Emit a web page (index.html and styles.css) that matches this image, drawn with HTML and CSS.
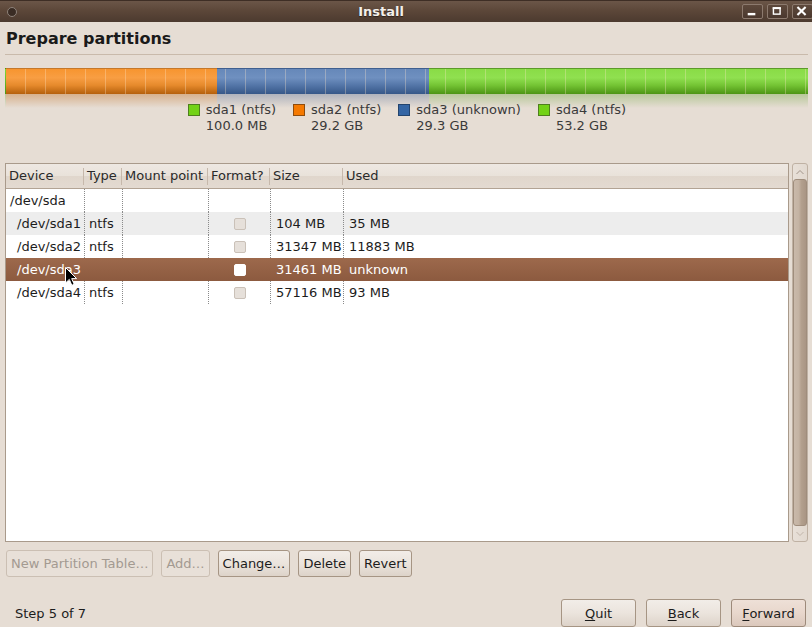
FILE: index.html
```html
<!DOCTYPE html>
<html>
<head>
<meta charset="utf-8">
<title>Install</title>
<link rel="stylesheet" href="styles.css">
</head>
<body>
<div class="window">
  <div class="titlebar">
    <span class="tb-menu"></span>
    <span class="tb-title">Install</span>
    <div class="tb-buttons">
      <span class="tb-btn"><svg width="21" height="15" viewBox="0 0 21 15"><rect x="6" y="9" width="8" height="2.5" fill="#fff"/></svg></span>
      <span class="tb-btn"><svg width="21" height="15" viewBox="0 0 21 15"><rect x="6.75" y="3.75" width="7" height="6.5" fill="none" stroke="#fff" stroke-width="1.5"/><rect x="6" y="3" width="8.5" height="2" fill="#fff"/></svg></span>
      <span class="tb-btn"><svg width="21" height="15" viewBox="0 0 21 15"><path d="M6.5 3.5 L13.5 10.5 M13.5 3.5 L6.5 10.5" stroke="#fff" stroke-width="2.2" stroke-linecap="square" fill="none"/></svg></span>
    </div>
  </div>

  <div class="content">
    <h1 class="heading">Prepare partitions</h1>
    <div class="sep"></div>

    <div class="pbar">
      <div class="seg seg-sda1"></div>
      <div class="seg seg-sda2"></div>
      <div class="seg seg-sda3"></div>
      <div class="seg seg-sda4"></div>
    </div>
    <div class="reflect">
      <div class="rseg rseg-sda1"></div>
      <div class="rseg rseg-sda2"></div>
      <div class="rseg rseg-sda3"></div>
      <div class="rseg rseg-sda4"></div>
    </div>

    <div class="legend">
      <div class="legend-item">
        <span class="swatch sw-green"></span>
        <div class="legend-text"><div>sda1 (ntfs)</div><div>100.0 MB</div></div>
      </div>
      <div class="legend-item">
        <span class="swatch sw-orange"></span>
        <div class="legend-text"><div>sda2 (ntfs)</div><div>29.2 GB</div></div>
      </div>
      <div class="legend-item">
        <span class="swatch sw-blue"></span>
        <div class="legend-text"><div>sda3 (unknown)</div><div>29.3 GB</div></div>
      </div>
      <div class="legend-item">
        <span class="swatch sw-green"></span>
        <div class="legend-text"><div>sda4 (ntfs)</div><div>53.2 GB</div></div>
      </div>
    </div>

    <div class="table-area">
      <div class="table">
        <div class="thead">
          <div class="th">Device</div>
          <div class="th">Type</div>
          <div class="th">Mount point</div>
          <div class="th">Format?</div>
          <div class="th">Size</div>
          <div class="th th-last">Used</div>
        </div>
        <div class="row">
          <div class="td td-dev">/dev/sda</div>
          <div class="td td-type"></div>
          <div class="td"></div>
          <div class="td"></div>
          <div class="td td-num"></div>
          <div class="td td-num"></div>
        </div>
        <div class="row row-alt">
          <div class="td td-dev td-child">/dev/sda1</div>
          <div class="td td-type">ntfs</div>
          <div class="td"></div>
          <div class="td td-check"><span class="check"></span></div>
          <div class="td td-num">104 MB</div>
          <div class="td td-num">35 MB</div>
        </div>
        <div class="row">
          <div class="td td-dev td-child">/dev/sda2</div>
          <div class="td td-type">ntfs</div>
          <div class="td"></div>
          <div class="td td-check"><span class="check"></span></div>
          <div class="td td-num">31347 MB</div>
          <div class="td td-num">11883 MB</div>
        </div>
        <div class="row row-selected">
          <div class="td td-dev td-child">/dev/sda3</div>
          <div class="td td-type"></div>
          <div class="td"></div>
          <div class="td td-check"><span class="check"></span></div>
          <div class="td td-num">31461 MB</div>
          <div class="td td-num">unknown</div>
        </div>
        <div class="row">
          <div class="td td-dev td-child">/dev/sda4</div>
          <div class="td td-type">ntfs</div>
          <div class="td"></div>
          <div class="td td-check"><span class="check"></span></div>
          <div class="td td-num">57116 MB</div>
          <div class="td td-num">93 MB</div>
        </div>
      </div>
      <div class="scrollbar">
        <div class="sb-arrow"><svg width="10" height="6" viewBox="0 0 10 6"><path d="M1.5 5 L5 1.5 L8.5 5" fill="none" stroke="#a2958a" stroke-width="1"/></svg></div>
        <div class="sb-thumb"></div>
        <div class="sb-arrow"><svg width="10" height="6" viewBox="0 0 10 6"><path d="M1.5 1 L5 4.5 L8.5 1" fill="none" stroke="#c2b6ab" stroke-width="1"/></svg></div>
      </div>
    </div>

    <div class="actions">
      <button class="btn btn-disabled">New Partition Table…</button>
      <button class="btn btn-disabled">Add…</button>
      <button class="btn">Change…</button>
      <button class="btn">Delete</button>
      <button class="btn">Revert</button>
    </div>

    <div class="footer">
      <span class="step">Step 5 of 7</span>
      <div class="nav">
        <button class="btn btn-nav"><u>Q</u>uit</button>
        <button class="btn btn-nav"><u>B</u>ack</button>
        <button class="btn btn-nav btn-default"><u>F</u>orward</button>
      </div>
    </div>
  </div>

  <svg class="cursor" width="13" height="20" viewBox="0 0 13 20"><path d="M0.5 0.5 L0.5 16 L4.3 12.4 L6.8 18.3 L9.2 17.3 L6.7 11.6 L11.6 11.6 Z" fill="#000" stroke="#fff" stroke-width="1"/></svg>
</div>
</body>
</html>
```

FILE: styles.css
```css
html, body {
  margin: 0;
  padding: 0;
}
body {
  font-family: "DejaVu Sans", "Liberation Sans", sans-serif;
  font-size: 13px;
  color: #1c1c1c;
  background: #e6ddd4;
}
.window {
  position: relative;
  width: 812px;
  height: 627px;
  overflow: hidden;
  background: #e6ddd4;
}

/* title bar */
.titlebar {
  height: 22px;
  display: flex;
  align-items: center;
  background: linear-gradient(#6b5648 0%, #5c4739 45%, #4c3a2f 100%);
  border-top: 1px solid #3e2e25;
  box-sizing: border-box;
}
.tb-menu {
  width: 8px;
  height: 8px;
  margin-left: 7px;
  border-radius: 50%;
  background: #3a2c24;
  border: 1px solid #8e827a;
}
.tb-title {
  flex: 1;
  text-align: center;
  padding-left: 3px;
  font-weight: bold;
  font-size: 13px;
  color: #f4efea;
  text-shadow: 0 1px 1px #2c201a;
}
.tb-buttons {
  display: flex;
  gap: 4px;
  margin-right: -1px;
  align-self: flex-start;
  margin-top: 3px;
}
.tb-btn {
  width: 19px;
  height: 13px;
  border: 1px solid #8c7a6e;
  border-radius: 2px;
  background: linear-gradient(#5e493c, #4a382e);
  display: flex;
  overflow: hidden;
}
.tb-btn svg {
  margin-left: -1px;
  margin-top: -1px;
}

/* content */
.content {
  padding: 0 4px 0 5px;
}
.heading {
  margin: 7px 0 0 1px;
  font-size: 16px;
  line-height: 19px;
  font-weight: bold;
  color: #1a1a1a;
}
.sep {
  margin-top: 6px;
  height: 1px;
  background: #c9baab;
}

/* partition bar */
.pbar {
  position: relative;
  margin-top: 13px;
  height: 26px;
  display: flex;
}
.pbar::after {
  content: "";
  position: absolute;
  inset: 1px 0 0 0;
  background: repeating-linear-gradient(to right, transparent 0 19px, rgba(255, 230, 200, 0.32) 19px 20px);
  background-position: 1px 0;
}
.seg {
  box-sizing: border-box;
  border-top: 1px solid;
}
.seg-sda1 {
  width: 1px;
  background: linear-gradient(#7ed93a, #4a9a14);
  border-color: #4e9a06;
}
.seg-sda2 {
  width: 211px;
  background: linear-gradient(#f7952f 0%, #f89e43 35%, #e68a2c 65%, #b5600c 100%);
  border-color: #c5782a;
}
.seg-sda3 {
  width: 212px;
  background: linear-gradient(#6688b9 0%, #6f90c0 35%, #5476a8 65%, #365788 100%);
  border-color: #3f5f8f;
}
.seg-sda4 {
  flex: 1;
  background: linear-gradient(#89dc46 0%, #90e050 35%, #74c434 65%, #4c9414 100%);
  border-color: #5c9a2a;
}
.reflect {
  height: 14px;
  display: flex;
}
.rseg-sda1 {
  width: 1px;
  background: linear-gradient(rgba(90, 160, 40, 0.35), rgba(90, 160, 40, 0));
}
.rseg-sda2 {
  width: 211px;
  background: linear-gradient(rgba(190, 105, 25, 0.38), rgba(190, 105, 25, 0));
}
.rseg-sda3 {
  width: 212px;
  background: linear-gradient(rgba(60, 90, 140, 0.32), rgba(60, 90, 140, 0));
}
.rseg-sda4 {
  flex: 1;
  background: linear-gradient(rgba(85, 155, 30, 0.32), rgba(85, 155, 30, 0));
}

/* legend */
.legend {
  margin-top: -6px;
  display: flex;
  justify-content: center;
  gap: 17px;
  line-height: 16px;
  color: #3a3a3a;
  padding-left: 1px;
}
.legend-item {
  display: flex;
  gap: 6px;
  align-items: flex-start;
}
.swatch {
  width: 10px;
  height: 10px;
  margin-top: 2px;
  border: 1px solid;
}
.sw-green { background: #73d216; border-color: #4f7f1e; }
.sw-orange { background: #f57900; border-color: #8f4c0c; }
.sw-blue { background: #3465a4; border-color: #23446e; }

/* table */
.table-area {
  margin-top: 29px;
  height: 379px;
  display: flex;
  gap: 3px;
}
.table {
  flex: 1;
  border: 1px solid #a99a8b;
  background: #fff;
  display: flex;
  flex-direction: column;
}
.thead,
.row {
  display: grid;
  grid-template-columns: 78px 38px 86px 62px 73px 1fr;
}
.thead {
  height: 24px;
  border-bottom: 1px solid #b2a394;
  background: linear-gradient(#eee8e2 0%, #e9e2da 48%, #e0d6cc 52%, #e3dad1 100%);
}
.th {
  line-height: 24px;
  padding-left: 3px;
  color: #2a2a2a;
  white-space: nowrap;
  background: linear-gradient(#c6b8ab, #c6b8ab) right center / 1px 17px no-repeat;
}
.th-last {
  background: none;
}
.row {
  height: 23px;
  line-height: 23px;
}
.row-alt {
  background: #ededed;
}
.row-selected {
  background: linear-gradient(#9d694c, #8c5a3f);
  color: #fff;
}
.td {
  white-space: nowrap;
  border-left: 1px dotted #8a8a8a;
}
.row-selected .td {
  border-left-color: transparent;
}
.td-dev {
  border-left: none;
  padding-left: 4px;
}
.td-child {
  padding-left: 11px;
}
.td-type {
  padding-left: 4px;
}
.td-num {
  padding-left: 5px;
}
.td-check {
  display: flex;
  align-items: center;
  justify-content: center;
}
.check {
  width: 10px;
  height: 10px;
  border: 1px solid #cac1b8;
  border-radius: 2px;
  background: #e6e0da;
  margin-left: 1px;
}
.row-selected .check {
  background: #fff;
  border-color: #fff;
}

/* scrollbar */
.scrollbar {
  width: 14px;
  border: 1px solid #bfb1a3;
  border-radius: 3px;
  background: linear-gradient(to right, #e8e0d8, #e2d9d0);
  display: flex;
  flex-direction: column;
}
.sb-arrow {
  height: 15px;
  display: flex;
  align-items: center;
  justify-content: center;
}
.sb-thumb {
  flex: 1;
  box-sizing: border-box;
  margin: 0 0 0 0;
  border: 1px solid #9f8d7c;
  border-radius: 3px;
  background: linear-gradient(to right, #c9b9aa 0%, #c4b3a3 40%, #b3a08e 60%, #a99584 100%);
}

/* buttons */
.actions {
  margin-top: 8px;
  margin-left: 1px;
  display: flex;
  gap: 8px;
}
.btn {
  font-family: "DejaVu Sans", "Liberation Sans", sans-serif;
  font-size: 13px;
  height: 27px;
  padding: 0 4px;
  margin: 0;
  border: 1px solid #a69584;
  border-radius: 3px;
  color: #1c1c1c;
  background: linear-gradient(#f2ede8 0%, #ebe4dd 50%, #ddd3c9 100%);
  white-space: nowrap;
}
.btn-disabled {
  color: #a39a91;
  border-color: #cbbfb3;
  background: #e8e0d8;
}
.footer {
  margin-top: 22px;
  display: flex;
  align-items: center;
  justify-content: space-between;
  margin-right: 2px;
}
.step {
  padding-left: 10px;
  color: #1c1c1c;
}
.nav {
  display: flex;
  gap: 10px;
}
.btn-nav {
  width: 75px;
  height: 28px;
}
.btn-default {
  background: linear-gradient(#eee0d7 0%, #e8d7cc 50%, #dbc8bc 100%);
  border-color: #9d8a7a;
}
.btn u {
  text-decoration-thickness: 1px;
  text-underline-offset: 2px;
}

/* mouse pointer */
.cursor {
  position: absolute;
  left: 65px;
  top: 267px;
}
```
